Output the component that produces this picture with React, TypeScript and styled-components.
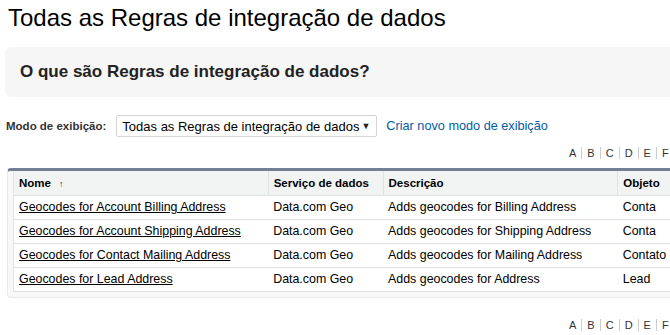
import React from "react";
import styled, { createGlobalStyle } from "styled-components";

const GlobalStyle = createGlobalStyle`
  html, body {
    margin: 0;
    padding: 0;
    overflow: hidden;
    background: #fff;
  }
  body {
    font-family: Arial, "Liberation Sans", sans-serif;
    color: #000;
  }
`;

const Page = styled.div`
  width: 690px;
  padding: 4px 0 0 5px;
`;

const Title = styled.h1`
  margin: 0 0 0 3px;
  font-size: 24px;
  font-weight: normal;
  line-height: 28px;
  color: #000;
`;

const HelpBox = styled.div`
  margin-top: 15px;
  background: #f6f6f6;
  border-radius: 6px;
  height: 50px;
  display: flex;
  align-items: center;
  padding-left: 15px;
`;

const HelpTitle = styled.h2`
  margin: 0;
  font-size: 17px;
  font-weight: bold;
  color: #222;
`;

const ViewBar = styled.div`
  display: flex;
  align-items: center;
  margin-top: 18px;
  height: 22px;
  padding-left: 1px;
`;

const ViewLabel = styled.label`
  font-size: 11.5px;
  font-weight: bold;
  color: #333;
  margin-right: 10px;
`;

const Select = styled.div`
  display: flex;
  align-items: center;
  justify-content: space-between;
  box-sizing: border-box;
  width: 261px;
  height: 22px;
  border: 1px solid #d4d4d4;
  border-radius: 2px;
  padding: 0 6px 0 5px;
  font-size: 13px;
  color: #000;
  background: #fff;
`;

const Caret = styled.span`
  font-size: 9px;
  color: #222;
`;

const CreateLink = styled.a`
  margin-left: 9px;
  font-size: 12.7px;
  color: #015ba7;
  text-decoration: none;
`;

const Alpha = styled.div<{ $top: number }>`
  display: flex;
  align-items: center;
  margin-top: ${p => p.$top}px;
  padding-left: 559px;
  font-size: 11px;
  color: #333;
  white-space: nowrap;
  height: 14px;
`;

const Letter = styled.span`
  padding: 0 5px;
  border-left: 1px solid #ccc;
  &:first-child {
    border-left: none;
  }
`;

const Block = styled.div`
  margin-top: 8px;
  margin-left: 2px;
  background: #f8f8f8;
  border-top: 3px solid #747e96;
  border-left: 1px solid #eaeaea;
  border-bottom: 1px solid #eaeaea;
  border-radius: 4px;
  padding: 0 0 5px 5px;
`;

const Table = styled.table`
  border-collapse: collapse;
  background: #fff;
  border: 1px solid #e0e3e5;
  border-top: none;
  font-size: 12.4px;
  width: 680px;
`;

const Th = styled.th<{ $w: number }>`
  width: ${p => p.$w}px;
  text-align: left;
  background: #f2f3f3;
  font-weight: bold;
  font-size: 11.5px;
  color: #000;
  height: 24px;
  padding: 0 5px;
  border-left: 1px solid #e0e3e5;
  border-bottom: 1px solid #e0e3e5;
  box-sizing: border-box;
  white-space: nowrap;
  &:first-child {
    border-left: none;
  }
`;

const SortArrow = styled.span`
  font-size: 9px;
  margin-left: 8px;
  color: #333;
`;

const Td = styled.td`
  height: 23px;
  padding: 0 5px;
  border-bottom: 1px solid #e3e3e3;
  color: #000;
  white-space: nowrap;
`;

const RuleLink = styled.a`
  color: #000;
  text-decoration: underline;
`;

const rules = [
  { name: "Geocodes for Account Billing Address", desc: "Adds geocodes for Billing Address", obj: "Conta" },
  { name: "Geocodes for Account Shipping Address", desc: "Adds geocodes for Shipping Address", obj: "Conta" },
  { name: "Geocodes for Contact Mailing Address", desc: "Adds geocodes for Mailing Address", obj: "Contato" },
  { name: "Geocodes for Lead Address", desc: "Adds geocodes for Address", obj: "Lead" },
];

const letters = ["A", "B", "C", "D", "E", "F"];

function AlphaBar({ top }: { top: number }) {
  return (
    <Alpha $top={top}>
      {letters.map(l => <Letter key={l}>{l}</Letter>)}
    </Alpha>
  );
}

export default function App() {
  return (
    <Page>
      <GlobalStyle />
      <Title>Todas as Regras de integração de dados</Title>
      <HelpBox>
        <HelpTitle>O que são Regras de integração de dados?</HelpTitle>
      </HelpBox>
      <ViewBar>
        <ViewLabel>Modo de exibição:</ViewLabel>
        <Select>
          <span>Todas as Regras de integração de dados</span>
          <Caret>▼</Caret>
        </Select>
        <CreateLink href="#">Criar novo modo de exibição</CreateLink>
      </ViewBar>
      <AlphaBar top={9} />
      <Block>
        <Table>
          <thead>
            <tr>
              <Th $w={255}>Nome<SortArrow>↑</SortArrow></Th>
              <Th $w={115}>Serviço de dados</Th>
              <Th $w={235}>Descrição</Th>
              <Th $w={75}>Objeto</Th>
            </tr>
          </thead>
          <tbody>
            {rules.map(r => (
              <tr key={r.name}>
                <Td><RuleLink href="#">{r.name}</RuleLink></Td>
                <Td>Data.com Geo</Td>
                <Td>{r.desc}</Td>
                <Td>{r.obj}</Td>
              </tr>
            ))}
          </tbody>
        </Table>
      </Block>
      <AlphaBar top={20} />
    </Page>
  );
}
